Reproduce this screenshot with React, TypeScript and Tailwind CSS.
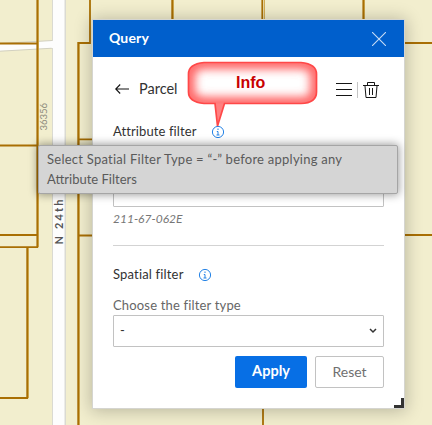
import React from 'react';

function ParcelMap() {
  return (
    <svg className="absolute inset-0" width="432" height="425" viewBox="0 0 432 425">
      <rect width="432" height="425" fill="#f2eece" />
      <path d="M0 44L52.5 40.5V48.2L0 51Z" fill="#fdfdfd" />
      <path d="M0 43.5L52.5 40.5M0 51.2L52.5 48.2" stroke="#d2d0c0" />
      <rect x="52" width="14" height="425" fill="#dadad2" />
      <rect x="53" width="11.5" height="425" fill="#fdfdfd" />
      <rect x="51.5" y="41" width="3" height="7" fill="#fdfdfd" />
      <g fill="none" stroke="#d0ac55" strokeWidth="1">
        <path d="M38.5 0V247M28.5 247V398M79.5 43V425M173.5 0V20M264.5 0V20M364.5 0V20" />
      </g>
      <g fill="none" stroke="#a96f04" strokeWidth="1.8">
        <path d="M37.3 0V247.2H0M0 43.5H38M0 145.5H38M0 235H38M27.2 247V398H0" />
        <path d="M90 0V43H78.2V425M78 139.3H93M78 235.5H93M172.2 0V20M262.3 0V20M363.3 0V20M404 43H432M404 235H432M263 408V425" />
      </g>
      <text transform="translate(46.5 130.5) rotate(-90)" fontFamily="Lato, sans-serif" fontSize="9.5" textLength="27.5" fill="#8d8b7d">36356</text>
      <text transform="translate(63 244.5) rotate(-90)" fontFamily="Lato, sans-serif" fontSize="11" fontWeight="700" textLength="45" fill="#555">N 24th</text>
    </svg>
  );
}

function InfoIcon() {
  return (
    <svg width="14" height="14" viewBox="0 0 14 14" fill="none" stroke="#2583e6">
      <circle cx="7" cy="7" r="5.6" strokeWidth="1" />
      <path d="M7 3.5V5M5.8 6.5H7V10M5.5 10H8.5" strokeWidth="1" />
    </svg>
  );
}

function Callout() {
  return (
    <div className="absolute left-[186px] top-[60px] h-[68px] w-[134px]">
      <svg className="absolute inset-0" width="134" height="68" viewBox="0 0 134 68">
        <defs>
          <filter id="soft" x="-20%" y="-30%" width="140%" height="160%">
            <feGaussianBlur stdDeviation="5" />
          </filter>
          <clipPath id="bubble">
            <path d="M18 2.5H115Q130.5 4 130.5 14V32Q130.5 43 115 43.5H38.5L31.5 66L29 43.5H18Q2.5 42 2.5 32V14Q2.5 4 18 2.5Z" />
          </clipPath>
        </defs>
        <g clipPath="url(#bubble)">
          <rect width="134" height="68" fill="#fff" />
          <path d="M18 2.5H115Q130.5 4 130.5 14V32Q130.5 43 115 43.5H18Q2.5 42 2.5 32V14Q2.5 4 18 2.5Z" fill="none" stroke="#ff6060" strokeWidth="13" filter="url(#soft)" />
          <path d="M29 43.5H38.5L31.5 66Z" fill="#ff8080" />
        </g>
        <path d="M18 2.5H115Q130.5 4 130.5 14V32Q130.5 43 115 43.5H38.5L31.5 66L29 43.5H18Q2.5 42 2.5 32V14Q2.5 4 18 2.5Z" fill="none" stroke="#ff4848" strokeWidth="1.7" />
      </svg>
      <span className="absolute left-[50px] top-[13px] font-['Liberation_Sans',sans-serif] text-[16px] font-bold leading-5 text-[#c80000]">Info</span>
    </div>
  );
}

function QueryPanel() {
  return (
    <section className="absolute left-[93px] top-5 flex h-[388px] w-[311px] flex-col bg-white shadow-[0_0_0_1px_#d5d5d0,0_1px_16px_2px_rgba(0,0,0,0.24)]">
      <header className="flex h-[37px] shrink-0 items-center justify-between bg-[#005fcc] pl-4 pr-[18px] text-white">
        <h1 className="relative -top-px text-[14px] font-bold leading-5 tracking-[0.15px]">Query</h1>
        <svg width="14" height="14" viewBox="0 0 14 14" stroke="#c6dcf5" strokeWidth="1.1">
          <path d="M0 0L14 14M14 0L0 14" />
        </svg>
      </header>
      <div className="flex flex-col px-5 text-[#323232]">
        <div className="mt-[22px] flex h-5 items-center">
          <svg className="ml-[2px]" width="14" height="10" viewBox="0 0 14 10" fill="none" stroke="#111" strokeWidth="1.1">
            <path d="M14 5H1M5.2 .5L.7 5L5.2 9.5" />
          </svg>
          <h2 className="ml-[10px] text-[14.5px] leading-5">Parcel</h2>
          <svg className="ml-auto mr-[5px]" width="43" height="18" viewBox="0 0 43 18" fill="none" stroke="#151515">
            <path d="M0 3.5H16M0 9.5H16M0 15.5H16" />
            <path d="M21.5 2V18" stroke="#c4c4c4" />
            <path d="M27 5.5H43M31.5 5V2.5H38.5V5M29 6L30 17.5H40L41 6M33.5 8V15M36.5 8V15" />
          </svg>
        </div>
        <div className="mt-[23px] flex h-5 items-center text-[13px]">
          <span className="w-[98px] whitespace-nowrap tracking-[0.1px]">Attribute filter</span>
          <InfoIcon />
        </div>
        <div className="mt-[33px] h-8 rounded-[1px] border border-[#c2c2c2]" />
        <p className="mt-[4px] h-4 text-[12px] italic leading-4 text-[#777]">211-67-062E</p>
        <hr className="mt-[18px] border-[#d3d3d3]" />
        <div className="mt-[19px] flex h-5 items-center text-[13px]">
          <span className="w-[85px] whitespace-nowrap tracking-[0.17px]">Spatial filter</span>
          <InfoIcon />
        </div>
        <label className="mt-[10px] h-5 text-[13px] leading-5 tracking-[0.17px] text-[#666]">Choose the filter type</label>
        <div className="flex h-8 items-center justify-between rounded-[1px] border border-[#c2c2c2] pl-[6px] pr-[6px] text-[13px]">
          <span>-</span>
          <svg width="8" height="6" viewBox="0 0 8 6" fill="none" stroke="#333" strokeWidth="1.5">
            <path d="M1 1L4 4L7 1" />
          </svg>
        </div>
        <div className="mt-[9px] flex h-8 justify-end gap-2">
          <button className="w-[72px] rounded-[2px] bg-[#076fe5] pb-[2px] text-[14.5px] font-bold text-white">Apply</button>
          <button className="w-[69px] rounded-[2px] border border-[#c2c2c2] pb-[2px] text-[14px] text-[#707070]">Reset</button>
        </div>
      </div>
      <span className="absolute bottom-0 right-0 h-[10px] w-[10px] border-b-[3px] border-r-[3px] border-[#333]" />
    </section>
  );
}

export default function App() {
  return (
    <main className="relative h-[425px] w-[432px] overflow-hidden font-['Lato',sans-serif]">
      <ParcelMap />
      <QueryPanel />
      <div role="tooltip" className="absolute left-[38px] top-[145px] h-[49px] w-[360px] whitespace-nowrap rounded-[2px] border border-[#a5a5a5] bg-[#d5d5d5] pl-2 pt-[3px] text-[13px] leading-5 tracking-[0.25px] text-[#5a5a5a] shadow-[0_0_8px_1px_rgba(0,0,0,0.38)]">
        Select Spatial Filter Type = “-” before applying any
        <br />
        <span className="tracking-normal">Attribute Filters</span>
      </div>
      <Callout />
    </main>
  );
}
